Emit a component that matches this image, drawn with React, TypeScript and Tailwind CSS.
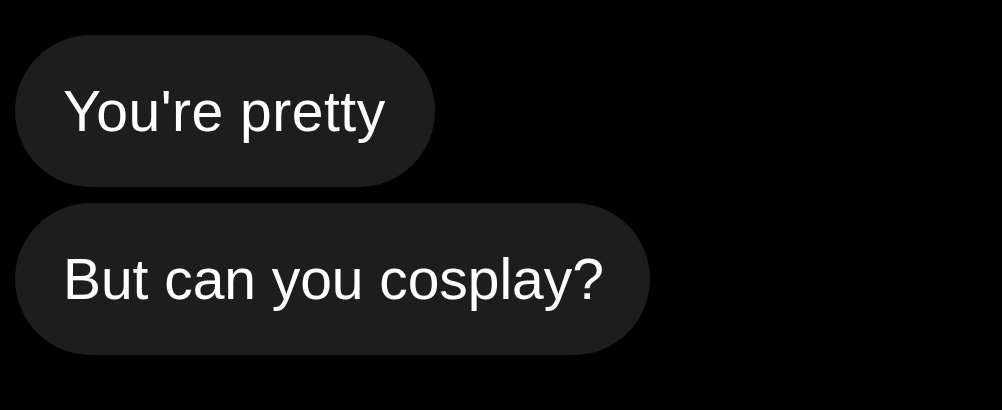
import React from "react";

export default function App() {
  return (
    <div className="w-[1002px] h-[410px] bg-black overflow-hidden flex flex-col items-start gap-[16px] pt-[35px] pl-[15px]" style={{ fontFamily: '"Liberation Sans", Arial, sans-serif' }}>
      <div className="h-[152px] rounded-full bg-[#1d1d1d] flex items-center pl-[48px] pr-[49px]">
        <span className="text-[57px] leading-none text-white tracking-[0.5px]">You're pretty</span>
      </div>
      <div className="h-[152px] rounded-full bg-[#1d1d1d] flex items-center pl-[48px] pr-[46px]">
        <span className="text-[57px] leading-none text-white tracking-[-0.05px]">But can you cosplay?</span>
      </div>
    </div>
  );
}
